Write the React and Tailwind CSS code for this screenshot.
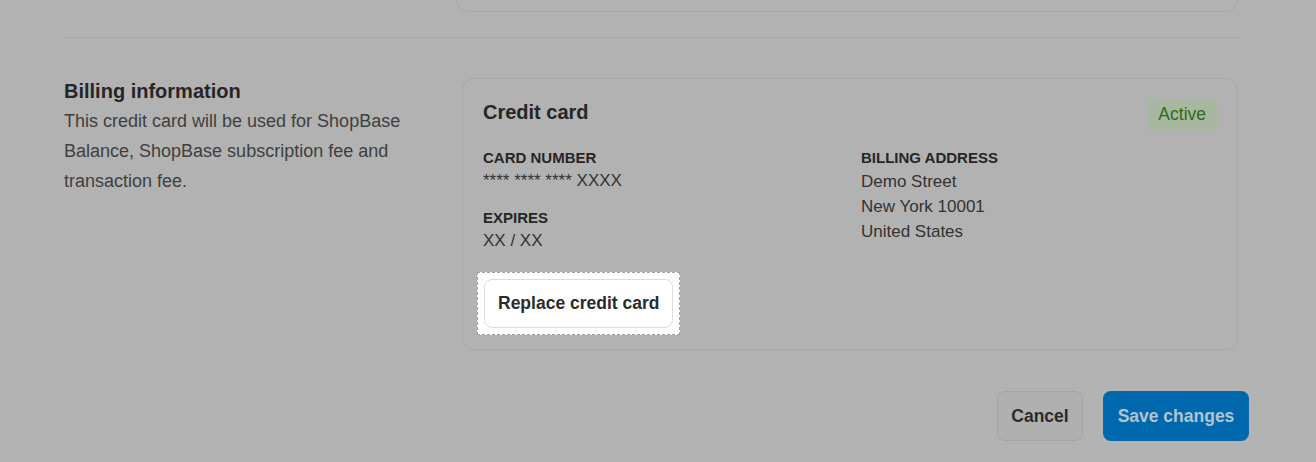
export default function App() {
  return (
    <div
      className="w-[1316px] h-[462px] overflow-hidden bg-[#b2b2b2] text-[#2a2a2a]"
      style={{ fontFamily: '"Liberation Sans", Arial, sans-serif' }}
    >
      <div className="pl-[64px] pr-[76px]">
        {/* tail of the previous card */}
        <div className="pl-[392px] pr-[2px]">
          <div className="h-[11px] -mt-[20px] pt-[20px] box-content border border-t-0 border-[#a8a8a8] rounded-b-[12px]" />
        </div>

        <div className="mt-[25px] border-t border-[#a6a6a6]" />

        <div className="flex pt-[40px]">
          <div className="w-[398px] shrink-0">
            <h2 className="text-[20px] font-bold leading-[24px] text-[#262626] mt-[1px]">Billing information</h2>
            <p className="text-[18px] leading-[30px] text-[#3f3f3f] mt-[3px]">
              This credit card will be used for ShopBase Balance, ShopBase subscription fee and transaction fee.
            </p>
          </div>

          <div className="w-[776px] h-[272px] border border-[#a8a8a8] rounded-[12px] px-[20px] pt-[21px]">
            <div className="flex items-start justify-between">
              <h3 className="text-[20px] font-bold leading-[24px] text-[#262626]">Credit card</h3>
              <span className="-mt-[1px] px-[11px] h-[31px] flex items-center rounded-[4px] bg-[#a8b8a0] text-[#2e6b1a] text-[17.5px]">
                Active
              </span>
            </div>

            <div className="flex mt-[19px]">
              <div className="w-[378px]">
                <div className="text-[15px] font-bold leading-[18px] text-[#262626]">CARD NUMBER</div>
                <div className="text-[17px] leading-[24px] text-[#333333] mt-[2px]">**** **** **** XXXX</div>
                <div className="text-[15px] font-bold leading-[18px] text-[#262626] mt-[16px]">EXPIRES</div>
                <div className="text-[17px] leading-[24px] text-[#333333] mt-[2px]">XX / XX</div>
              </div>
              <div>
                <div className="text-[15px] font-bold leading-[18px] text-[#262626]">BILLING ADDRESS</div>
                <div className="text-[17px] leading-[25px] text-[#333333] mt-[2px]">
                  <div>Demo Street</div>
                  <div>New York 10001</div>
                  <div>United States</div>
                </div>
              </div>
            </div>

            <div className="mt-[19px] -ml-[6px] inline-flex p-[6px] bg-white border border-dashed border-[#a0a0a0]">
              <button className="h-[49px] px-[13px] rounded-[8px] border border-[#dcdcdc] bg-white text-[17.5px] font-bold text-[#2b2b2b]">
                Replace credit card
              </button>
            </div>
          </div>
        </div>

        <div className="flex justify-end gap-[20px] mt-[41px] -mr-[9px]">
          <button className="h-[50px] w-[86px] rounded-[8px] border border-[#a4a4a4] bg-[#b0b0b0] text-[17.5px] font-bold text-[#2b2b2b]">
            Cancel
          </button>
          <button className="h-[50px] w-[146px] rounded-[8px] bg-[#0068ad] text-[17.5px] font-bold text-[#b3c3d0]">
            Save changes
          </button>
        </div>
      </div>
    </div>
  )
}
